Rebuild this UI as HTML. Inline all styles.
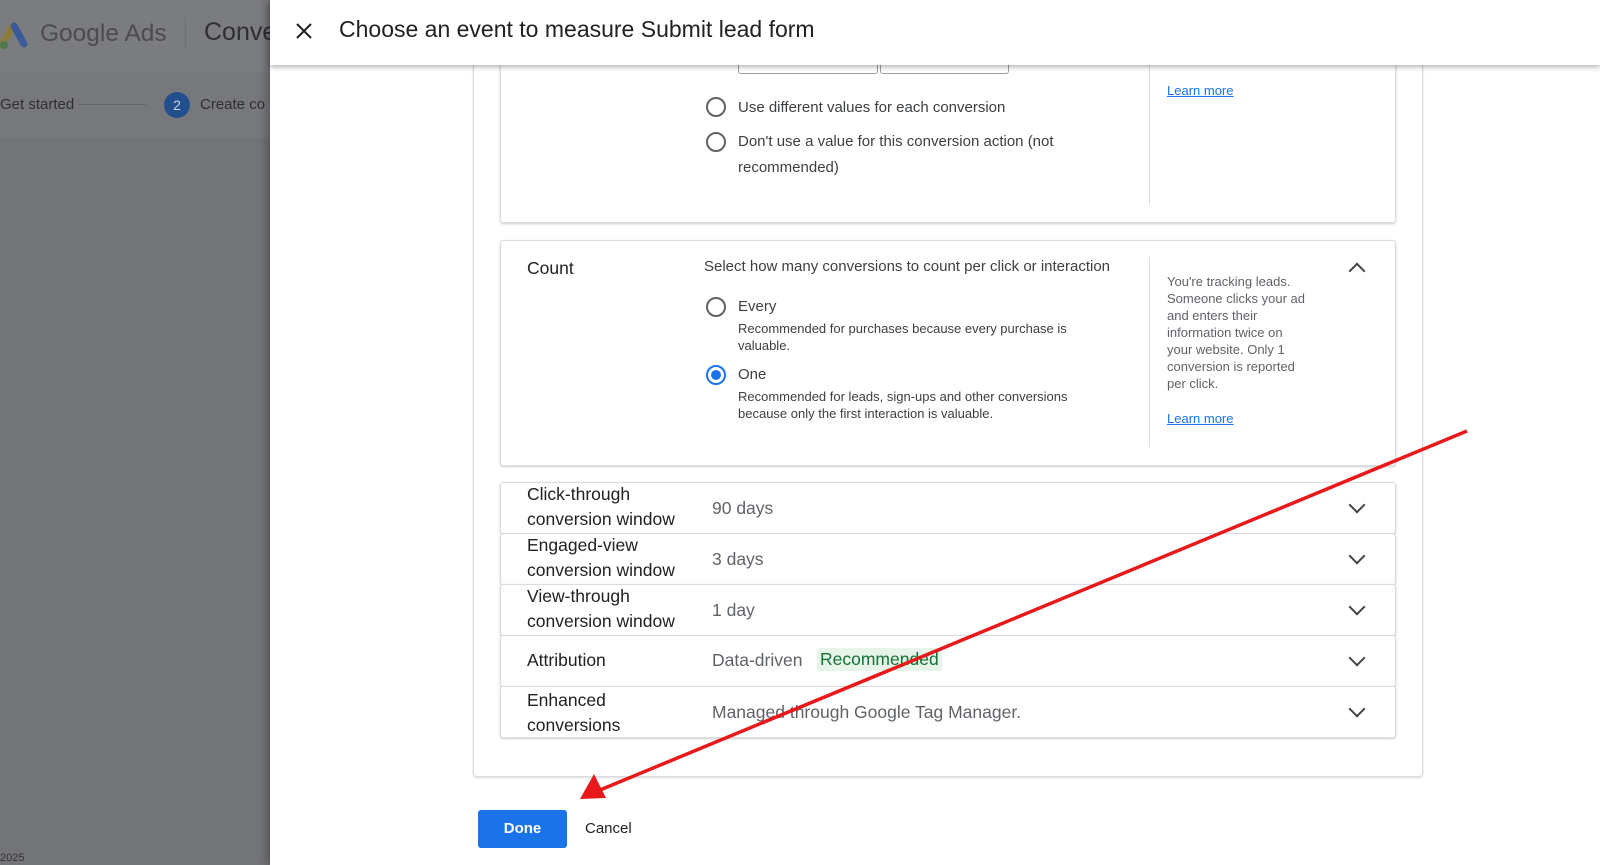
<!DOCTYPE html>
<html><head><meta charset="utf-8"><style>
*{margin:0;padding:0;box-sizing:border-box}
body{width:1600px;height:865px;overflow:hidden;position:relative;background:#fff;font-family:"Liberation Sans",Arial,sans-serif;color:#202124}
.abs{position:absolute}
#left{left:0;top:0;width:272px;height:865px;background:#737478}
#lhead{left:0;top:0;width:272px;height:72px;background:#7b7c80}
#lstrip{left:0;top:72px;width:272px;height:66px;background:#77787c}
#panel{left:270px;top:0;width:1330px;height:865px;background:#fff;box-shadow:-4px 0 8px rgba(0,0,0,.25)}
#hdr{left:270px;top:0;width:1330px;height:65px;background:#fff;box-shadow:0 2px 5px rgba(0,0,0,.3);z-index:5}
.card{position:absolute;background:#fff;border:1px solid #dadce0;box-shadow:0 1px 2px rgba(0,0,0,.2);border-radius:3px}
.radio{position:absolute;width:20px;height:20px;border:2px solid #5f6368;border-radius:50%}
.radio.on{border-color:#1a73e8}
.radio.on:after{content:"";position:absolute;left:3px;top:3px;width:10px;height:10px;border-radius:50%;background:#1a73e8}
.t14{font-size:15px;color:#3c4043}
.t12{font-size:13px;color:#3c4043;line-height:17px}
.lbl{font-size:17.5px;color:#202124;line-height:25px}
.val{font-size:17.5px;color:#5f6368}
.chev{position:absolute;width:12px;height:12px;border-right:2px solid #444;border-bottom:2px solid #444;transform:rotate(45deg)}
.lm{color:#1a73e8;text-decoration:underline;font-size:13px}
</style></head><body>
<div class="abs" id="left"></div>
<div class="abs" id="lhead"></div>
<div class="abs" id="lstrip"></div>
<svg class="abs" style="left:0;top:20px" width="28" height="30"><path d="M2 25 L12 7" stroke="#8a7b3a" stroke-width="7" stroke-linecap="round"/><path d="M14 6 L24 24" stroke="#3a5a9a" stroke-width="7" stroke-linecap="round"/><circle cx="4" cy="25" r="4" fill="#4d7a4d"/></svg>
<div class="abs" style="left:40px;top:20px;font-size:24.5px;color:#4b4c50">Google Ads</div>
<div class="abs" style="left:185px;top:18px;width:1px;height:32px;background:#6e6f73"></div>
<div class="abs" style="left:204px;top:18px;font-size:25px;color:#2e2f33">Conve</div>
<div class="abs" style="left:0;top:96px;font-size:15px;color:#2e2f33">Get started</div>
<div class="abs" style="left:78px;top:104px;width:68px;height:1px;background:#66676b"></div>
<div class="abs" style="left:164px;top:92px;width:26px;height:26px;border-radius:50%;background:#22508e;color:#c9d4e6;font-size:14px;text-align:center;line-height:26px">2</div>
<div class="abs" style="left:200px;top:96px;font-size:15px;color:#2e2f33">Create co</div>
<div class="abs" style="left:0;top:852px;font-size:11px;color:#333">2025</div>

<div class="abs" id="panel"></div>
<div class="abs" id="hdr">
<svg class="abs" style="left:25px;top:22px" width="18" height="18"><path d="M2 2L16 16M16 2L2 16" stroke="#202124" stroke-width="2"/></svg>
<div class="abs" style="left:69px;top:16px;font-size:23px;color:#202124">Choose an event to measure Submit lead form</div>
</div>

<div class="abs" style="left:473px;top:40px;width:950px;height:737px;border:1px solid #dadce0;border-top:none;box-shadow:0 1px 2px rgba(0,0,0,.15);border-radius:0 0 4px 4px"></div>

<div class="card" style="left:500px;top:30px;width:896px;height:193px"></div>
<div class="abs" style="left:738px;top:55px;width:140px;height:19px;border:1px solid #9aa0a6;border-top:none;border-radius:0 0 3px 3px"></div>
<div class="abs" style="left:880px;top:55px;width:129px;height:19px;border:1px solid #9aa0a6;border-top:none;border-radius:0 0 3px 3px"></div>
<div class="radio" style="left:706px;top:97px"></div>
<div class="abs t14" style="left:738px;top:99px">Use different values for each conversion</div>
<div class="radio" style="left:706px;top:132px"></div>
<div class="abs t14" style="left:738px;top:129px;line-height:26px;width:360px">Don't use a value for this conversion action (not recommended)</div>
<div class="abs" style="left:1149px;top:65px;width:1px;height:140px;background:#dadce0"></div>
<div class="abs lm" style="left:1167px;top:83px">Learn more</div>

<div class="card" style="left:500px;top:240px;width:896px;height:226px"></div>
<div class="abs lbl" style="left:527px;top:256px">Count</div>
<div class="abs t14" style="left:704px;top:258px">Select how many conversions to count per click or interaction</div>
<div class="radio" style="left:706px;top:297px"></div>
<div class="abs t14" style="left:738px;top:298px">Every</div>
<div class="abs t12" style="left:738px;top:320px">Recommended for purchases because every purchase is<br>valuable.</div>
<div class="radio on" style="left:706px;top:365px"></div>
<div class="abs t14" style="left:738px;top:366px">One</div>
<div class="abs t12" style="left:738px;top:388px">Recommended for leads, sign-ups and other conversions<br>because only the first interaction is valuable.</div>
<div class="abs" style="left:1149px;top:257px;width:1px;height:190px;background:#dadce0"></div>
<div class="abs t12" style="left:1167px;top:273px;color:#5f6368;width:145px">You're tracking leads. Someone clicks your ad and enters their information twice on<br>your website. Only 1 conversion is reported per click.</div>
<div class="abs lm" style="left:1167px;top:411px">Learn more</div>
<div class="chev" style="left:1351px;top:265px;transform:rotate(-135deg)"></div>

<div class="card" style="left:500px;top:482px;width:896px;height:52px"></div>
<div class="card" style="left:500px;top:533px;width:896px;height:52px"></div>
<div class="card" style="left:500px;top:584px;width:896px;height:52px"></div>
<div class="card" style="left:500px;top:635px;width:896px;height:52px"></div>
<div class="card" style="left:500px;top:686px;width:896px;height:52px"></div>

<div class="abs lbl" style="left:527px;top:482px">Click-through<br>conversion window</div>
<div class="abs val" style="left:712px;top:498px">90 days</div>
<div class="abs lbl" style="left:527px;top:533px">Engaged-view<br>conversion window</div>
<div class="abs val" style="left:712px;top:549px">3 days</div>
<div class="abs lbl" style="left:527px;top:584px">View-through<br>conversion window</div>
<div class="abs val" style="left:712px;top:600px">1 day</div>
<div class="abs lbl" style="left:527px;top:648px">Attribution</div>
<div class="abs val" style="left:712px;top:650px">Data-driven</div>
<div class="abs" style="left:817px;top:648px;padding:1px 3px;background:#e6f4ea;color:#137333;font-size:17.5px;border-radius:3px">Recommended</div>
<div class="abs lbl" style="left:527px;top:688px">Enhanced<br>conversions</div>
<div class="abs val" style="left:712px;top:702px">Managed through Google Tag Manager.</div>
<div class="chev" style="left:1351px;top:499px"></div>
<div class="chev" style="left:1351px;top:550px"></div>
<div class="chev" style="left:1351px;top:601px"></div>
<div class="chev" style="left:1351px;top:652px"></div>
<div class="chev" style="left:1351px;top:703px"></div>

<div class="abs" style="left:478px;top:810px;width:89px;height:38px;background:#1a73e8;border-radius:3px;color:#fff;font-size:15px;font-weight:bold;text-align:center;line-height:38px">Done</div>
<div class="abs" style="left:585px;top:820px;font-size:15px;color:#202124">Cancel</div>

<svg class="abs" style="left:0;top:0;z-index:10" width="1600" height="865">
<line x1="1467" y1="431" x2="600" y2="790" stroke="#e8191b" stroke-width="3.5"/>
<polygon points="580,799 594,774 606,798" fill="#e8191b"/>
</svg>
</body></html>
